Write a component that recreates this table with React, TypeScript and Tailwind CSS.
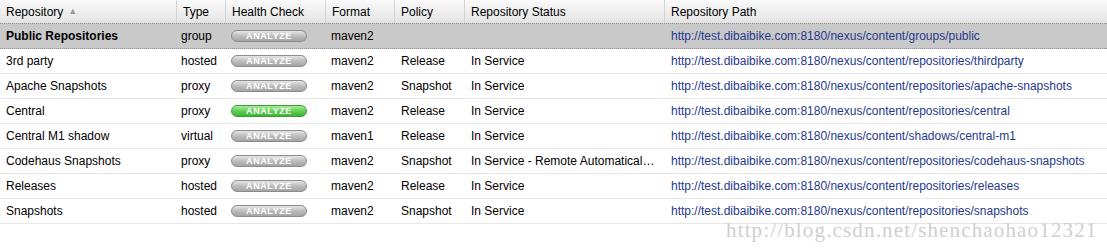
import React from "react";

type Row = {
  name: string;
  type: string;
  green?: boolean;
  format: string;
  policy: string;
  status: string;
  path: string;
  selected?: boolean;
};

const rows: Row[] = [
  { name: "Public Repositories", type: "group", format: "maven2", policy: "", status: "", path: "http://test.dibaibike.com:8180/nexus/content/groups/public", selected: true },
  { name: "3rd party", type: "hosted", format: "maven2", policy: "Release", status: "In Service", path: "http://test.dibaibike.com:8180/nexus/content/repositories/thirdparty" },
  { name: "Apache Snapshots", type: "proxy", format: "maven2", policy: "Snapshot", status: "In Service", path: "http://test.dibaibike.com:8180/nexus/content/repositories/apache-snapshots" },
  { name: "Central", type: "proxy", green: true, format: "maven2", policy: "Release", status: "In Service", path: "http://test.dibaibike.com:8180/nexus/content/repositories/central" },
  { name: "Central M1 shadow", type: "virtual", format: "maven1", policy: "Release", status: "In Service", path: "http://test.dibaibike.com:8180/nexus/content/shadows/central-m1" },
  { name: "Codehaus Snapshots", type: "proxy", format: "maven2", policy: "Snapshot", status: "In Service - Remote Automatically Blocked and Available", path: "http://test.dibaibike.com:8180/nexus/content/repositories/codehaus-snapshots" },
  { name: "Releases", type: "hosted", format: "maven2", policy: "Release", status: "In Service", path: "http://test.dibaibike.com:8180/nexus/content/repositories/releases" },
  { name: "Snapshots", type: "hosted", format: "maven2", policy: "Snapshot", status: "In Service", path: "http://test.dibaibike.com:8180/nexus/content/repositories/snapshots" },
];

const cols = "grid grid-cols-[176px_49px_100px_69px_70px_200px_1fr]";

function Analyze({ green }: { green?: boolean }) {
  return (
    <div
      className={
        "flex h-[12px] w-[76px] items-center justify-center rounded-full border text-[9px] font-bold leading-none tracking-[0.6px] text-white " +
        (green
          ? "border-[#3f9b3a] bg-gradient-to-b from-[#a6ec98] via-[#5fd055] to-[#3cb536]"
          : "border-[#8c8c8c] bg-gradient-to-b from-[#e6e6e6] via-[#bdbdbd] to-[#a4a4a4]")
      }
    >
      ANALYZE
    </div>
  );
}

function HeaderCell({ children, first }: { children: React.ReactNode; first?: boolean }) {
  return (
    <div className={"flex h-[23px] items-center px-[6px] " + (first ? "" : "border-l border-[#d4d4d4]")}>
      {children}
    </div>
  );
}

export default function App() {
  return (
    <div
      className="relative h-[252px] w-[1107px] overflow-hidden bg-white text-[12px] text-black"
      style={{ fontFamily: '"Liberation Sans", Arial, sans-serif' }}
    >
      <div className={cols + " bg-gradient-to-b from-[#fafafa] to-[#e4e4e4]"}>
        <HeaderCell first>
          <span>Repository</span>
          <span className="ml-[5px] text-[9px] text-[#9a9a9a]">▲</span>
        </HeaderCell>
        <HeaderCell>Type</HeaderCell>
        <HeaderCell>Health Check</HeaderCell>
        <HeaderCell>Format</HeaderCell>
        <HeaderCell>Policy</HeaderCell>
        <HeaderCell>Repository Status</HeaderCell>
        <HeaderCell>Repository Path</HeaderCell>
      </div>
      {rows.map((r) => (
        <div
          key={r.name}
          className={
            cols +
            " items-center " +
            (r.selected
              ? "h-[26px] border-y border-dotted border-[#8f8f8f] bg-[#c9c9c9]"
              : "h-[25px] border-b border-[#e8e8e8]")
          }
        >
          <div className={"truncate px-[6px] " + (r.selected ? "font-bold" : "")}>{r.name}</div>
          <div className="px-[5px]">{r.type}</div>
          <div className="px-[6px]">
            <Analyze green={r.green} />
          </div>
          <div className="px-[6px]">{r.format}</div>
          <div className="px-[7px]">{r.policy}</div>
          <div className="truncate px-[7px]">{r.status}</div>
          <div className="truncate px-[7px] text-[#26388d]">{r.path}</div>
        </div>
      ))}
      <div
        className="pointer-events-none absolute left-[726px] top-[220px] text-[21px] leading-none tracking-[1.15px] text-[#cfcfcf]"
        style={{ fontFamily: '"Liberation Serif", "Times New Roman", serif' }}
      >
        http://blog.csdn.net/shenchaohao12321
      </div>
    </div>
  );
}
